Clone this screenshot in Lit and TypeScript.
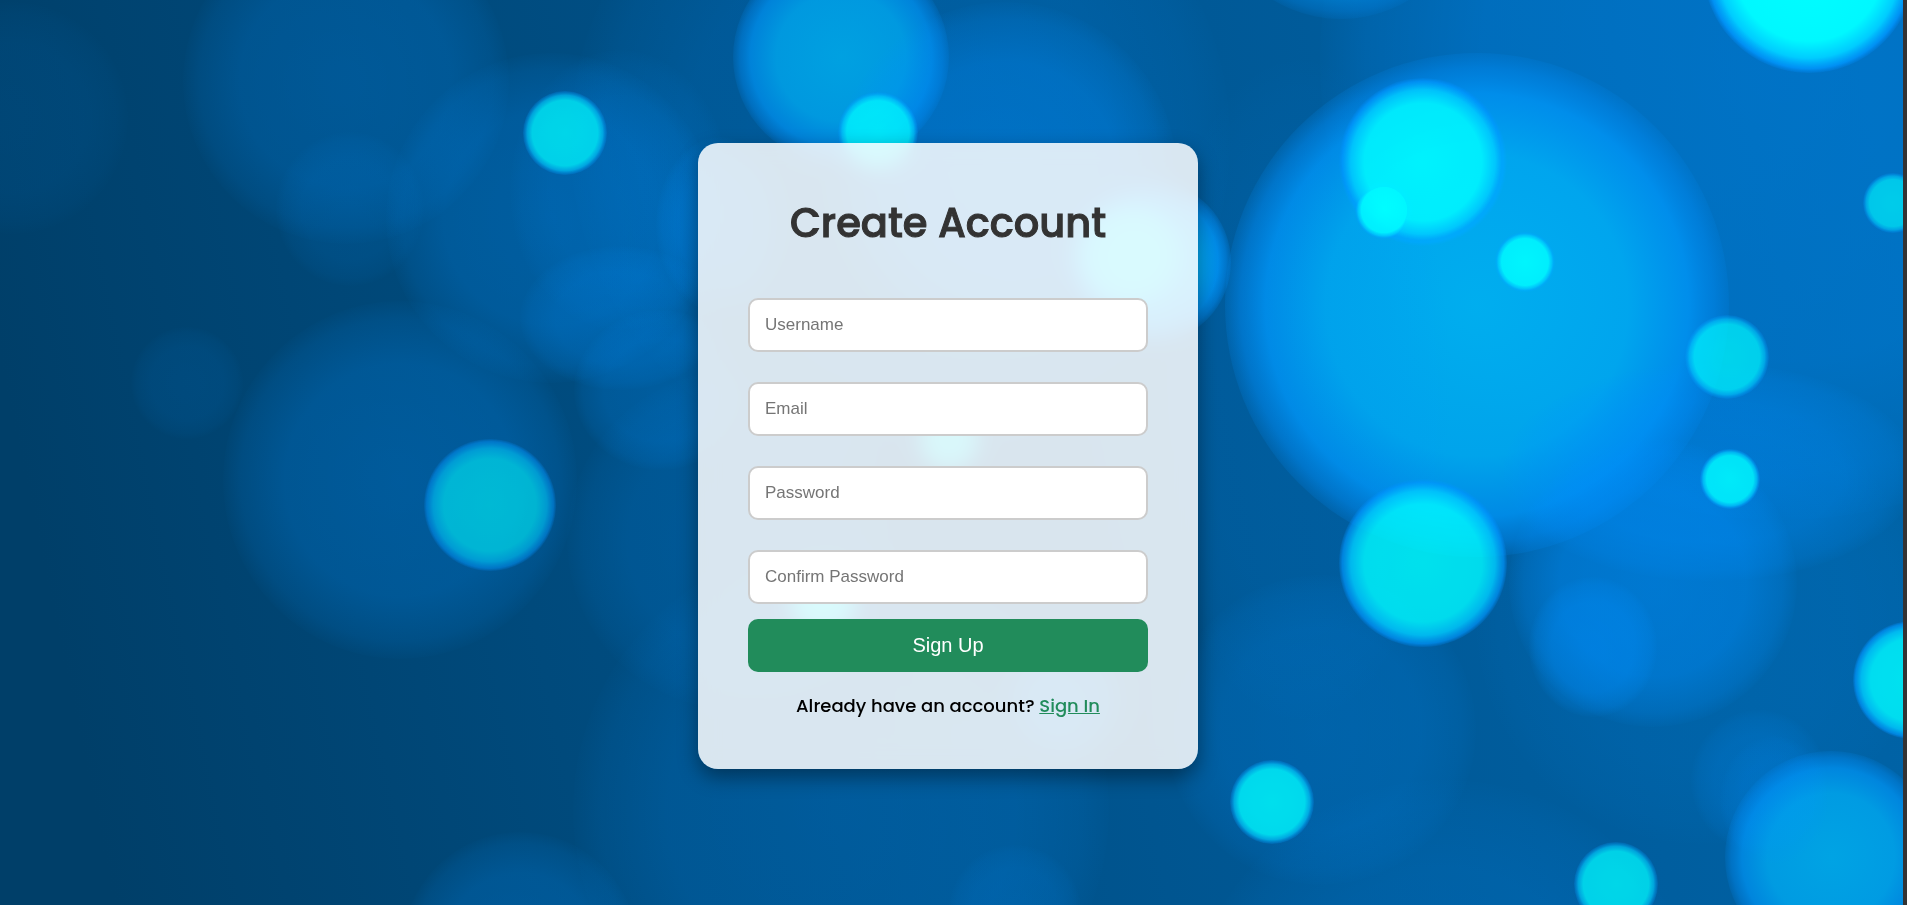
import { LitElement, html, svg, css } from "lit";
import { customElement } from "lit/decorators.js";

type Kind = "haze" | "azure" | "cyan" | "spark";
type Light = [cx: number, cy: number, rx: number, ry: number, kind: Kind, opacity: number];

// Out-of-focus lights, back to front, in the scene's own units.
const LIGHTS: Light[] = [
  [1780, 60, 460, 460, "haze", 0.38],
  [1700, 620, 224, 224, "haze", 0.1],
  [12, 118, 116, 116, "haze", 0.08],
  [346, 81, 163, 163, "haze", 0.24],
  [350, 209, 74, 77, "haze", 0.12],
  [900, 140, 330, 330, "haze", 0.18],
  [551, 218, 165, 165, "haze", 0.28],
  [620, 190, 110, 140, "haze", 0.14],
  [620, 318, 100, 72, "haze", 0.22],
  [720, 225, 64, 88, "haze", 0.3],
  [660, 390, 86, 80, "haze", 0.24],
  [187, 383, 56, 56, "haze", 0.1],
  [400, 480, 177, 179, "haze", 0.28],
  [737, 540, 170, 170, "haze", 0.18],
  [841, 810, 268, 268, "haze", 0.2],
  [520, 950, 118, 118, "haze", 0.25],
  [1015, 911, 66, 66, "haze", 0.14],
  [1065, 700, 60, 60, "haze", 0.4],
  [1321, 730, 155, 155, "haze", 0.2],
  [1445, 1040, 260, 260, "haze", 0.16],
  [841, 57, 108, 107, "azure", 0.78],
  [1005, 174, 172, 172, "haze", 0.4],
  [1341, -112, 131, 131, "azure", 0.5],
  [1150, 262, 81, 81, "azure", 0.95],
  [1130, 255, 60, 56, "cyan", 0.6],
  [1477, 305, 252, 252, "azure", 0.92],
  [1300, 390, 150, 330, "haze", 0.08],
  [1710, 472, 207, 109, "haze", 0.38],
  [1653, 583, 144, 144, "haze", 0.5],
  [1593, 647, 64, 70, "haze", 0.4],
  [1759, 781, 68, 71, "haze", 0.2],
  [1831, 857, 106, 106, "azure", 0.8],
  [1774, 800, 54, 64, "haze", 0.15],
  [565, 133, 42, 42, "spark", 0.74],
  [490, 505, 66, 66, "cyan", 0.58],
  [878, 132, 40, 40, "spark", 0.78],
  [949, 440, 32, 32, "spark", 0.7],
  [823, 600, 36, 36, "spark", 0.8],
  [1423, 162, 84, 84, "cyan", 0.86],
  [1384, 210, 29, 29, "spark", 0.9],
  [1525, 262, 30, 30, "spark", 0.88],
  [1727, 357, 42, 42, "spark", 0.7],
  [1893, 203, 30, 30, "spark", 0.64],
  [1809, -33, 106, 106, "cyan", 1],
  [1423, 563, 84, 84, "cyan", 0.82],
  [1730, 479, 30, 30, "spark", 0.84],
  [1912, 680, 59, 59, "cyan", 0.82],
  [1272, 802, 42, 42, "spark", 0.8],
  [1616, 884, 42, 42, "spark", 0.75],
];

@customElement("bokeh-backdrop")
export class BokehBackdrop extends LitElement {
  static styles = css`
    :host {
      display: block;
      overflow: hidden;
    }
    .scene {
      display: block;
      width: 100%;
      height: 100%;
    }
    .cyan,
    .spark {
      mix-blend-mode: lighten;
    }
  `;

  render() {
    return html`
      <svg class="scene" viewBox="0 0 1903 905" preserveAspectRatio="xMidYMid slice" aria-hidden="true">
        <defs>
          <linearGradient id="base" x1="0" y1="0.4" x2="1" y2="0.3">
            <stop offset="0" stop-color="#003f69" />
            <stop offset="0.25" stop-color="#004a7c" />
            <stop offset="0.55" stop-color="#005590" />
            <stop offset="0.75" stop-color="#005c9c" />
            <stop offset="1" stop-color="#0064a8" />
          </linearGradient>
          <radialGradient id="haze">
            <stop offset="0" stop-color="#0090ff" stop-opacity="0.95" />
            <stop offset="0.65" stop-color="#0090ff" stop-opacity="0.82" />
            <stop offset="0.9" stop-color="#0090ff" stop-opacity="0.4" />
            <stop offset="1" stop-color="#0090ff" stop-opacity="0.05" />
          </radialGradient>
          <radialGradient id="azure">
            <stop offset="0" stop-color="#00b4f4" />
            <stop offset="0.6" stop-color="#00aaf2" />
            <stop offset="0.84" stop-color="#0094f4" stop-opacity="0.9" />
            <stop offset="0.94" stop-color="#0088ec" stop-opacity="0.6" />
            <stop offset="1" stop-color="#0084e8" stop-opacity="0.2" />
          </radialGradient>
          <radialGradient id="cyan">
            <stop offset="0" stop-color="#00ffff" />
            <stop offset="0.7" stop-color="#00f8ff" />
            <stop offset="0.86" stop-color="#00ccff" />
            <stop offset="0.96" stop-color="#0098ff" stop-opacity="0.8" />
            <stop offset="1" stop-color="#008cf8" stop-opacity="0.2" />
          </radialGradient>
          <radialGradient id="spark">
            <stop offset="0" stop-color="#00ffff" />
            <stop offset="0.78" stop-color="#00f8ff" />
            <stop offset="0.9" stop-color="#00ccff" stop-opacity="0.85" />
            <stop offset="1" stop-color="#0098ff" stop-opacity="0.2" />
          </radialGradient>
        </defs>
        <rect width="1903" height="905" fill="url(#base)" />
        ${LIGHTS.map(
          ([cx, cy, rx, ry, kind, opacity]) => svg`
            <ellipse class=${kind} cx=${cx} cy=${cy} rx=${rx} ry=${ry} fill="url(#${kind})" opacity=${opacity} />`
        )}
      </svg>
    `;
  }
}

const FIELDS = [
  { id: "username", label: "Username", type: "text", autocomplete: "username" },
  { id: "email", label: "Email", type: "email", autocomplete: "email" },
  { id: "password", label: "Password", type: "password", autocomplete: "new-password" },
  { id: "confirm", label: "Confirm Password", type: "password", autocomplete: "new-password" },
];

@customElement("sign-up-card")
export class SignUpCard extends LitElement {
  static styles = css`
    :host {
      display: block;
      box-sizing: border-box;
      width: 100%;
      max-width: 500px;
      padding: 50px;
      border-radius: 20px;
      background: rgba(255, 255, 255, 0.85);
      -webkit-backdrop-filter: blur(10px);
      backdrop-filter: blur(10px);
      box-shadow: 0 8px 20px rgba(0, 0, 0, 0.4);
      font-family: Poppins, Inter, sans-serif;
      color: #000;
      text-align: center;
    }
    .title {
      margin: 0 0 45px;
      font-size: 40px;
      line-height: 60px;
      font-weight: 500;
      color: #333;
      -webkit-text-stroke: 1px #333;
    }
    .form {
      display: flex;
      flex-direction: column;
    }
    .fields {
      display: grid;
      gap: 30px;
    }
    .field {
      display: block;
    }
    .input {
      display: block;
      box-sizing: border-box;
      width: 100%;
      height: 54px;
      padding: 0 15px;
      border: 2px solid #ccc;
      border-radius: 10px;
      background: #fff;
      font-family: "Liberation Sans", Arial, sans-serif;
      font-size: 17px;
      color: #333;
    }
    .input::placeholder {
      color: #757575;
    }
    .input:focus {
      outline: none;
      border-color: #218c5b;
    }
    .submit {
      height: 53px;
      margin-top: 15px;
      padding: 0;
      border: none;
      border-radius: 10px;
      background: #218c5b;
      font-family: "Liberation Sans", Arial, sans-serif;
      font-size: 20px;
      color: #fff;
      cursor: pointer;
    }
    .submit:hover {
      background: #1b754c;
    }
    .switch {
      margin: 20px 0 0;
      font-size: 18px;
      line-height: 27px;
      font-weight: 500;
    }
    .link {
      color: #218c5b;
    }
  `;

  private onSubmit(event: Event) {
    event.preventDefault();
  }

  render() {
    return html`
      <h1 class="title">Create Account</h1>
      <form class="form" @submit=${this.onSubmit}>
        <div class="fields">
          ${FIELDS.map(
            (field) => html`
              <label class="field" for=${field.id}>
                <input
                  class="input"
                  id=${field.id}
                  name=${field.id}
                  type=${field.type}
                  placeholder=${field.label}
                  aria-label=${field.label}
                  autocomplete=${field.autocomplete}
                  required
                />
              </label>
            `
          )}
        </div>
        <button class="submit" type="submit">Sign Up</button>
      </form>
      <p class="switch">Already have an account? <a class="link" href="#sign-in">Sign In</a></p>
    `;
  }
}

@customElement("app-root")
export class AppRoot extends LitElement {
  static styles = css`
    :host {
      display: block;
      position: relative;
      box-sizing: border-box;
      min-height: 100vh;
      border-right: 4px solid #333;
      overflow: hidden;
    }
    .backdrop {
      position: absolute;
      inset: 0;
    }
    .page {
      position: relative;
      display: flex;
      align-items: center;
      justify-content: center;
      box-sizing: border-box;
      min-height: 100vh;
      padding: 7px 7px 0 0;
    }
  `;

  render() {
    return html`
      <bokeh-backdrop class="backdrop"></bokeh-backdrop>
      <main class="page">
        <sign-up-card></sign-up-card>
      </main>
    `;
  }
}
